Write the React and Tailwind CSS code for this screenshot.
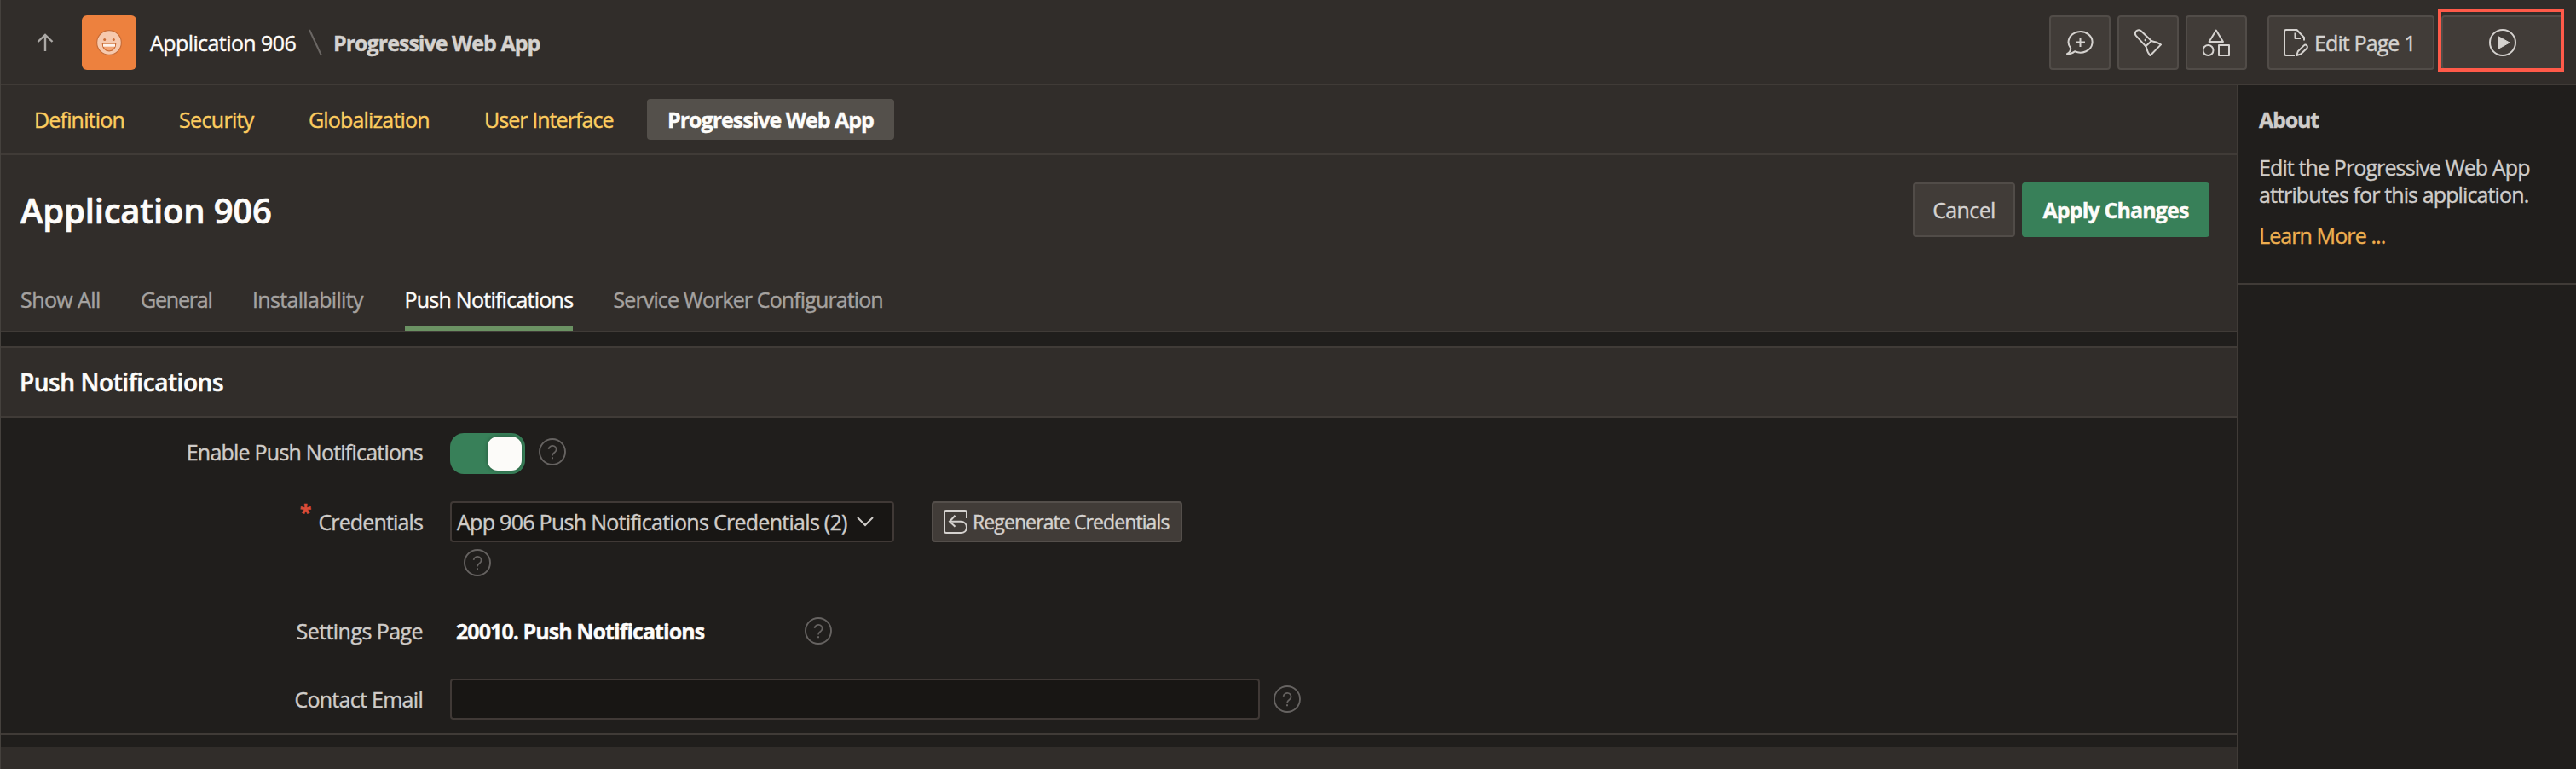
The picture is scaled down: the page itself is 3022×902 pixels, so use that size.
import React from 'react';

function HelpIcon({ className = '' }) {
  return (
    <svg viewBox="0 0 32 32" className={`h-8 w-8 shrink-0 ${className}`} fill="none" stroke="#666361" strokeWidth="1.9">
      <circle cx="16" cy="16" r="15" />
      <path d="M11.6 12.9a4.5 4.2 0 1 1 7.4 3.4C17.1 17.7 16 18.4 16 20.4" strokeWidth="1.7" />
      <path d="M16 22.3v2" strokeWidth="2" />
    </svg>
  );
}

function ArrowUp() {
  return (
    <svg viewBox="0 0 20 22" className="h-[22px] w-5 shrink-0" fill="none" stroke="#aba8a5" strokeWidth="2.4">
      <path d="M10 21V2M1.5 10 10 1.8 18.5 10" />
    </svg>
  );
}

function AppLogo() {
  return (
    <div className="flex h-16 w-16 shrink-0 items-center justify-center rounded-[6px] bg-[#ed813e]">
      <svg viewBox="0 0 32 32" className="h-8 w-8" fill="none" stroke="#c96c36" strokeWidth="1.2">
        <circle cx="16" cy="16" r="14.4" fill="#f6c9ae" />
        <path d="M8.3 17.2h15.4c0 5-3 8.6-7.7 8.6s-7.7-3.6-7.7-8.6z" fill="#f3a473" />
        <path d="M9 17.8h14v2.9H9z" fill="#fdf3ec" stroke="none" />
        <circle cx="10.7" cy="12.4" r="1.5" fill="#c96c36" stroke="none" />
        <circle cx="21.3" cy="12.4" r="1.5" fill="#c96c36" stroke="none" />
      </svg>
    </div>
  );
}

function CommentIcon() {
  return (
    <svg viewBox="0 0 32 32" className="h-8 w-8" fill="none" stroke="#d5d2cf" strokeWidth="2" strokeLinejoin="round">
      <path d="M5.2 22.5A14 12.3 0 1 1 10 26.2C7.5 28.3 4.5 29.3 1 29.2 3.8 27.8 5.2 25.6 5.2 22.5z" />
      <path d="M16.5 10v11M11 15.5h11" />
    </svg>
  );
}

function FlashlightIcon() {
  return (
    <svg viewBox="0 0 32 32" className="h-8 w-8" fill="none" stroke="#d5d2cf" strokeWidth="2" strokeLinejoin="round">
      <path d="M13.3 20.3 1.9 7.8C.7 6.3.7 4 2.1 2.5s4-1.7 5.6-.2L20 14" />
      <path d="M20 14 13.3 20.3C14.6 22.5 14.6 25 16 27.5L18.4 31.3 31 18.4 27 16.2C24.5 14.8 22.5 15.2 20 14z" />
      <path d="M12 12.3l1.3 1.4" />
    </svg>
  );
}

function ShapesIcon() {
  return (
    <svg viewBox="0 0 32 32" className="h-8 w-8" fill="none" stroke="#d5d2cf" strokeWidth="2" strokeLinejoin="round">
      <path d="M15.8 1.5 24 15H7.6z" />
      <circle cx="6.5" cy="25" r="6" />
      <rect x="19" y="19" width="12" height="12" />
    </svg>
  );
}

function PageEditIcon() {
  return (
    <svg viewBox="0 0 32 32" className="h-8 w-8 shrink-0" fill="none" stroke="#d5d2cf" strokeWidth="2" strokeLinejoin="round">
      <path d="M13 31H3a2 2 0 0 1-2-2V3a2 2 0 0 1 2-2h12.5L24 10v3.5" />
      <path d="M13.5 4.5V11H20" />
      <path d="M15.3 31 16.8 26.3 23.8 19.4a2.3 2.3 0 0 1 3.4 3.3L20 29.5z" />
    </svg>
  );
}

function PlayIcon() {
  return (
    <svg viewBox="0 0 32 32" className="h-8 w-8" fill="none" stroke="#d5d2cf" strokeWidth="2">
      <circle cx="16" cy="16" r="15" />
      <path d="M10.5 8.5 24 16 10.5 23.5z" fill="#d5d2cf" strokeWidth="1" strokeLinejoin="round" />
    </svg>
  );
}

function RegenerateIcon() {
  return (
    <svg viewBox="0 0 28 28" className="h-7 w-7 shrink-0" fill="none" stroke="#d5d2cf" strokeWidth="2">
      <path d="M27 10V3a2 2 0 0 0-2-2H3a2 2 0 0 0-2 2v22a2 2 0 0 0 2 2h17c4.3 0 7-2.6 7-6.5S24 13.7 20 13.7H7" />
      <path d="M13.5 6.8 7 13.7l6.5 6" />
    </svg>
  );
}

const iconButton = 'flex h-16 w-[72px] shrink-0 items-center justify-center rounded-[4px] border-2 border-[#514c48] bg-[#413c38]';

const navItems = [
  { label: 'Definition', cls: 'w-[154px] tracking-[-0.82px]' },
  { label: 'Security', cls: 'w-[136px] tracking-[-0.66px]' },
  { label: 'Globalization', cls: 'w-[190px] tracking-[-0.84px]' },
  { label: 'User Interface', cls: 'w-[199px] tracking-[-0.94px]' },
];

const regionTabs = [
  { label: 'Show All', cls: 'w-[93px] tracking-[-0.58px]' },
  { label: 'General', cls: 'w-[83px] tracking-[-1.2px]' },
  { label: 'Installability', cls: 'w-[131px] tracking-[-0.67px]' },
  { label: 'Push Notifications', cls: 'w-[197.5px] -ml-[0.5px] tracking-[-0.75px]', active: true },
  { label: 'Service Worker Configuration', cls: 'w-[317px] -ml-[0.5px] tracking-[-0.88px]' },
];

function Header() {
  return (
    <header className="flex h-[100px] shrink-0 items-center border-b-2 border-[#403b37] bg-[#312d2a] pt-[2px] pr-[14px] pl-[42px]">
      <ArrowUp />
      <div className="ml-[33px]"><AppLogo /></div>
      <span className="ml-4 w-[171px] tracking-[-0.58px] text-[#fdfcfa]">Application 906</span>
      <svg viewBox="0 0 16 32" className="ml-[15px] h-8 w-4 shrink-0" fill="none" stroke="#6b6764" strokeWidth="2">
        <path d="M1 1l14 30" />
      </svg>
      <span className="ml-[13px] font-bold tracking-[-0.97px] text-[#d5d2cf]">Progressive Web App</span>
      <div className="ml-auto flex gap-2">
        <button className={iconButton}><CommentIcon /></button>
        <button className={iconButton}><FlashlightIcon /></button>
        <button className={iconButton}><ShapesIcon /></button>
        <button className="ml-4 flex h-16 w-[196px] items-center rounded-[4px] border-2 border-[#514c48] bg-[#413c38] pl-[17px] text-[#d5d2cf]">
          <PageEditIcon />
          <span className="ml-[4px] tracking-[-0.88px]">Edit Page 1</span>
        </button>
        <div className="relative">
          <button className="flex h-16 w-[144px] items-center justify-center rounded-[4px] border-2 border-[#514c48] bg-[#413c38]">
            <PlayIcon />
          </button>
          <div className="absolute -top-2 -left-1 h-[74px] w-[148px] border-4 border-[#ff5a49]" />
        </div>
      </div>
    </header>
  );
}

function Sidebar() {
  return (
    <aside className="w-[398px] shrink-0 border-l-2 border-[#403b37] bg-[#201e1c]">
      <div className="border-b-2 border-[#403b37] pt-6 pb-10 pl-6 leading-8 text-[#cfccc9]">
        <h2 className="font-bold tracking-[-1.2px]">About</h2>
        <p className="mt-6 tracking-[-0.88px]">Edit the Progressive Web App<br />attributes for this application.</p>
        <a className="mt-4 block tracking-[-0.9px] text-[#eeae4f]">Learn More ...</a>
      </div>
    </aside>
  );
}

function Form() {
  return (
    <div className="border-b-2 border-[#403b37] pt-[18px] pb-4 text-[#cfccc9]">
      <div className="flex h-12 gap-8">
        <label className="w-[495px] text-right leading-[44px] tracking-[-0.77px]">Enable Push Notifications</label>
        <div className="flex">
          <div className="flex h-12 w-[88px] justify-end rounded-[16px] bg-[#388059] p-1">
            <div className="h-10 w-10 rounded-[12px] bg-[#fcfbf9] shadow-[0_0_5px_rgba(0,0,0,0.35)]" />
          </div>
          <HelpIcon className="mt-[6px] ml-4" />
        </div>
      </div>
      <div className="mt-8 flex gap-8">
        <div className="flex w-[495px] justify-end">
          <span className="mr-[8px] leading-6 font-bold text-[#d94b37]">*</span>
          <label className="leading-[48px] tracking-[-0.86px]">Credentials</label>
        </div>
        <div className="flex">
          <div className="w-[521px]">
            <div className="flex h-12 items-center rounded-[4px] border-2 border-[#403936] bg-[#181614] pl-[6px]">
              <span className="w-[458px] tracking-[-0.71px]">App 906 Push Notifications Credentials (2)</span>
              <svg viewBox="0 0 20 12" className="ml-[11px] h-3 w-5" fill="none" stroke="#cfccc9" strokeWidth="2">
                <path d="M1 1l9 9 9-9" />
              </svg>
            </div>
            <HelpIcon className="mt-2 ml-4" />
          </div>
          <button className="ml-11 flex h-12 w-[294px] items-center rounded-[4px] border-2 border-[#544f4b] bg-[#413c38] pl-3 text-[23px] text-[#d5d2cf]">
            <RegenerateIcon />
            <span className="ml-[6px] tracking-[-0.9px]">Regenerate Credentials</span>
          </button>
        </div>
      </div>
      <div className="mt-10 flex h-12 items-center gap-8">
        <label className="w-[495px] text-right tracking-[-0.56px]">Settings Page</label>
        <div className="flex items-center pl-[7px]">
          <span className="w-[291px] font-bold tracking-[-0.95px] text-[#fdfcfa]">20010. Push Notifications</span>
          <HelpIcon className="ml-[118px]" />
        </div>
      </div>
      <div className="mt-8 flex h-12 items-center gap-8">
        <label className="w-[495px] text-right tracking-[-0.71px]">Contact Email</label>
        <div className="flex items-center">
          <input className="h-12 w-[950px] rounded-[4px] border-2 border-[#403936] bg-[#181614]" />
          <HelpIcon className="ml-4" />
        </div>
      </div>
    </div>
  );
}

export default function App() {
  return (
    <div className="flex h-[902px] w-[3022px] flex-col overflow-hidden border-l border-[#45413d] bg-[#201e1c] font-['Open_Sans',sans-serif] text-[25px] leading-[34px] whitespace-nowrap [-webkit-text-stroke:0.4px]">
      <Header />
      <div className="flex min-h-0 flex-1">
        <main className="flex min-w-0 flex-1 flex-col">
          <nav className="flex h-[82px] shrink-0 items-center gap-4 border-b-2 border-[#403b37] bg-[#312d2a] pl-[15px] text-[#fccc5f]">
            {navItems.map((n) => (
              <a key={n.label} className={`flex h-12 shrink-0 items-center pl-6 ${n.cls}`}>{n.label}</a>
            ))}
            <a className="flex h-12 w-[290px] items-center rounded-[4px] bg-[#54504b] pl-[24px] font-bold tracking-[-1px] text-[#fdfcfa]">Progressive Web App</a>
          </nav>
          <section className="shrink-0 border-b-2 border-[#403b37] bg-[#312d2a] pt-8">
            <div className="flex h-16 items-center justify-between pr-8 pl-[23px]">
              <h1 className="pt-px text-[40px] font-semibold tracking-[-0.18px] text-[#fdfcfa] [-webkit-text-stroke:0.7px]">Application 906</h1>
              <div className="flex gap-2">
                <button className="h-16 w-[120px] rounded-[4px] border-2 border-[#514c48] bg-[#413c38] tracking-[-0.6px] text-[#d5d2cf]">Cancel</button>
                <button className="h-16 w-[220px] rounded-[4px] bg-[#388059] font-bold tracking-[-0.88px] text-[#fdfcfa]">Apply Changes</button>
              </div>
            </div>
            <div className="flex h-[110px] items-end gap-12 pl-[23px]">
              {regionTabs.map((t) => (
                <a key={t.label} className={`flex h-[69px] shrink-0 items-center border-b-[6px] ${t.cls} ${t.active ? 'border-[#6b9263] text-[#fdfcfa]' : 'border-transparent text-[#a5a2a0]'}`}>{t.label}</a>
              ))}
            </div>
          </section>
          <section className="mt-4 shrink-0">
            <h2 className="flex h-[84px] items-center border-y-2 border-[#403b37] bg-[#312d2a] pl-[22px] text-[28px] font-semibold tracking-[-0.44px] text-[#fdfcfa] [-webkit-text-stroke:0.5px]">Push Notifications</h2>
            <Form />
          </section>
          <div className="mt-[14px] flex-1 bg-[#312d2a]" />
        </main>
        <Sidebar />
      </div>
    </div>
  );
}
